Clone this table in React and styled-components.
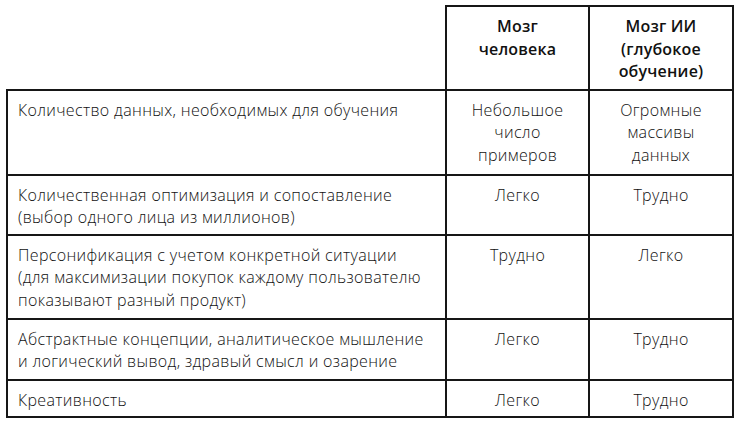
import React from "react";
import styled, { createGlobalStyle } from "styled-components";

const Global = createGlobalStyle`
  html, body { margin: 0; padding: 0; background: #ffffff; }
  body { font-family: "Open Sans", "Noto Sans", "DejaVu Sans", sans-serif; }
`;

const Page = styled.div`
  padding: 5px 0 0 6px;
`;

const Table = styled.table`
  border-collapse: collapse;
  table-layout: fixed;
  width: 726px;
  color: #111111;
  font-size: 16px;
  letter-spacing: 0.35px;
  font-weight: 300;
  line-height: 22.5px;
`;

const Cell = styled.td`
  border: 2px solid #161616;
  padding: ${(p) => (p.$head ? "8px 6px 0" : "7.5px 10px 0")};
  vertical-align: top;
  text-align: ${(p) => (p.$left ? "left" : "center")};
  font-weight: ${(p) => (p.$head ? 600 : 300)};
  letter-spacing: ${(p) => (p.$head ? "0.2px" : "0.35px")};
`;

const Corner = styled.td`
  border: none;
  border-right: 2px solid #161616;
  border-bottom: 2px solid #161616;
`;

const Row = styled.tr`
  height: ${(p) => p.$h}px;
`;

const rows = [
  { h: 85, label: ["Количество данных, необходимых для обучения"], a: ["Небольшое", "число", "примеров"], b: ["Огромные", "массивы", "данных"] },
  { h: 60, label: ["Количественная оптимизация и сопоставление", "(выбор одного лица из миллионов)"], a: ["Легко"], b: ["Трудно"] },
  { h: 84, label: ["Персонификация с учетом конкретной ситуации", "(для максимизации покупок каждому пользователю", "показывают разный продукт)"], a: ["Трудно"], b: ["Легко"] },
  { h: 61, label: ["Абстрактные концепции, аналитическое мышление", "и логический вывод, здравый смысл и озарение"], a: ["Легко"], b: ["Трудно"] },
  { h: 37, label: ["Креативность"], a: ["Легко"], b: ["Трудно"] },
];

const Lines = ({ items }) =>
  items.map((t, i) => (
    <React.Fragment key={i}>
      {i > 0 && <br />}
      {t}
    </React.Fragment>
  ));

export default function App() {
  return (
    <>
      <Global />
      <Page>
        <Table>
          <colgroup>
            <col style={{ width: 439 }} />
            <col style={{ width: 143 }} />
            <col style={{ width: 144 }} />
          </colgroup>
          <tbody>
            <Row $h={84}>
              <Corner />
              <Cell $head>
                <Lines items={["Мозг", "человека"]} />
              </Cell>
              <Cell $head>
                <Lines items={["Мозг ИИ", "(глубокое", "обучение)"]} />
              </Cell>
            </Row>
            {rows.map((r, i) => (
              <Row key={i} $h={r.h}>
                <Cell $left>
                  <Lines items={r.label} />
                </Cell>
                <Cell>
                  <Lines items={r.a} />
                </Cell>
                <Cell>
                  <Lines items={r.b} />
                </Cell>
              </Row>
            ))}
          </tbody>
        </Table>
      </Page>
    </>
  );
}
